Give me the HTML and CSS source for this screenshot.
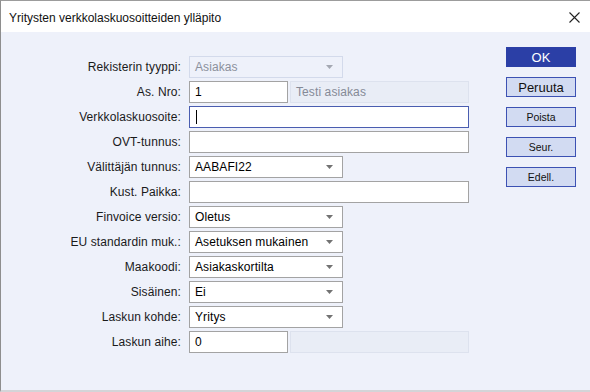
FILE: index.html
```
<!DOCTYPE html>
<html lang="fi">
<head>
    <meta charset="UTF-8">
    <title>Yritysten verkkolaskuosoitteiden ylläpito</title>
    <link rel="stylesheet" href="styles.css">
</head>
<body>
    <div class="window">
        <div class="titlebar">
            <span class="title">Yritysten verkkolaskuosoitteiden ylläpito</span>
            <svg class="close" width="11" height="11" viewBox="0 0 11 11">
                <path d="M0.5 0.5 L10.5 10.5 M10.5 0.5 L0.5 10.5" stroke="#222" stroke-width="1.1" fill="none"/>
            </svg>
        </div>
        <div class="content">
            <div class="form">
                <label>Rekisterin tyyppi:</label>
                <div class="select disabled short">
                    <span>Asiakas</span>
                    <svg width="7" height="4" viewBox="0 0 7 4"><path d="M0 0 H7 L3.5 4 Z" fill="#a4a8b2"/></svg>
                </div>

                <label>As. Nro:</label>
                <div class="pair">
                    <div class="input small">1</div>
                    <div class="info">Testi asiakas</div>
                </div>

                <label>Verkkolaskuosoite:</label>
                <div class="input focus"><span class="caret"></span></div>

                <label>OVT-tunnus:</label>
                <div class="input"></div>

                <label>Välittäjän tunnus:</label>
                <div class="select short">
                    <span>AABAFI22</span>
                    <svg width="7" height="4" viewBox="0 0 7 4"><path d="M0 0 H7 L3.5 4 Z" fill="#727272"/></svg>
                </div>

                <label>Kust. Paikka:</label>
                <div class="input"></div>

                <label>Finvoice versio:</label>
                <div class="select short">
                    <span>Oletus</span>
                    <svg width="7" height="4" viewBox="0 0 7 4"><path d="M0 0 H7 L3.5 4 Z" fill="#727272"/></svg>
                </div>

                <label>EU standardin muk.:</label>
                <div class="select short">
                    <span>Asetuksen mukainen</span>
                    <svg width="7" height="4" viewBox="0 0 7 4"><path d="M0 0 H7 L3.5 4 Z" fill="#727272"/></svg>
                </div>

                <label>Maakoodi:</label>
                <div class="select short">
                    <span>Asiakaskortilta</span>
                    <svg width="7" height="4" viewBox="0 0 7 4"><path d="M0 0 H7 L3.5 4 Z" fill="#727272"/></svg>
                </div>

                <label>Sisäinen:</label>
                <div class="select short">
                    <span>Ei</span>
                    <svg width="7" height="4" viewBox="0 0 7 4"><path d="M0 0 H7 L3.5 4 Z" fill="#727272"/></svg>
                </div>

                <label>Laskun kohde:</label>
                <div class="select short">
                    <span>Yritys</span>
                    <svg width="7" height="4" viewBox="0 0 7 4"><path d="M0 0 H7 L3.5 4 Z" fill="#727272"/></svg>
                </div>

                <label>Laskun aihe:</label>
                <div class="pair">
                    <div class="input small">0</div>
                    <div class="info"></div>
                </div>
            </div>

            <div class="buttons">
                <button class="btn primary">OK</button>
                <button class="btn big">Peruuta</button>
                <button class="btn">Poista</button>
                <button class="btn">Seur.</button>
                <button class="btn">Edell.</button>
            </div>
        </div>
    </div>
</body>
</html>
```

FILE: styles.css
```
html, body {
    margin: 0;
    padding: 0;
}
body {
    font-family: "Liberation Sans", Arial, sans-serif;
    font-size: 12px;
    color: #111;
    background: #ffffff;
}
.window {
    width: 590px;
    height: 392px;
    box-sizing: border-box;
    border-top: 1px solid #9c9c9c;
    border-left: 1px solid #8e8e8e;
    border-bottom: 2px solid #d4d4d8;
    display: flex;
    flex-direction: column;
}
.titlebar {
    height: 31px;
    background: #ffffff;
    display: flex;
    align-items: center;
    justify-content: space-between;
    padding: 0 10px 0 8px;
}
.title {
    font-size: 12px;
    color: #111;
    margin-top: 2px;
}
.close {
    margin-top: 1px;
}
.content {
    flex: 1;
    background: #eef1fa;
    display: flex;
    align-items: flex-start;
}
.form {
    display: grid;
    grid-template-columns: 180px 280px;
    grid-auto-rows: 22px;
    column-gap: 8px;
    row-gap: 3px;
    padding-top: 24px;
    letter-spacing: 0.1px;
}
.form label {
    display: flex;
    align-items: center;
    justify-content: flex-end;
    color: #1a1a1a;
}
.input, .select {
    box-sizing: border-box;
    height: 22px;
    background: #ffffff;
    border: 1px solid #a3a3a3;
    display: flex;
    align-items: center;
    padding: 0 5px;
    color: #000;
}
.input.focus {
    border-color: #4a5db0;
}
.caret {
    width: 1px;
    height: 14px;
    background: #000;
    margin-left: 1px;
}
.select {
    justify-content: space-between;
    padding-right: 9px;
}
.short {
    width: 154px;
}
.select.disabled {
    background: #eef1fa;
    border-color: #d3daeb;
    color: #8b909c;
}
.pair {
    display: flex;
    gap: 2px;
}
.input.small {
    width: 99px;
}
.info {
    flex: 1;
    box-sizing: border-box;
    height: 22px;
    background: #e9edf6;
    border: 1px solid #dde2ee;
    display: flex;
    align-items: center;
    padding: 0 5px;
    color: #858a96;
}
.buttons {
    margin-left: 37px;
    padding-top: 15px;
    display: flex;
    flex-direction: column;
    gap: 10px;
}
.btn {
    width: 70px;
    height: 20px;
    box-sizing: border-box;
    border: 1px solid #3c51b3;
    background: #d2dbf2;
    color: #111;
    font-family: "Liberation Sans", Arial, sans-serif;
    font-size: 10.5px;
    padding: 0;
    cursor: pointer;
}
.btn.big {
    font-size: 13px;
}
.btn.primary {
    background: #2b3fa6;
    border-color: #2b3fa6;
    color: #ffffff;
    font-size: 13px;
}
```
